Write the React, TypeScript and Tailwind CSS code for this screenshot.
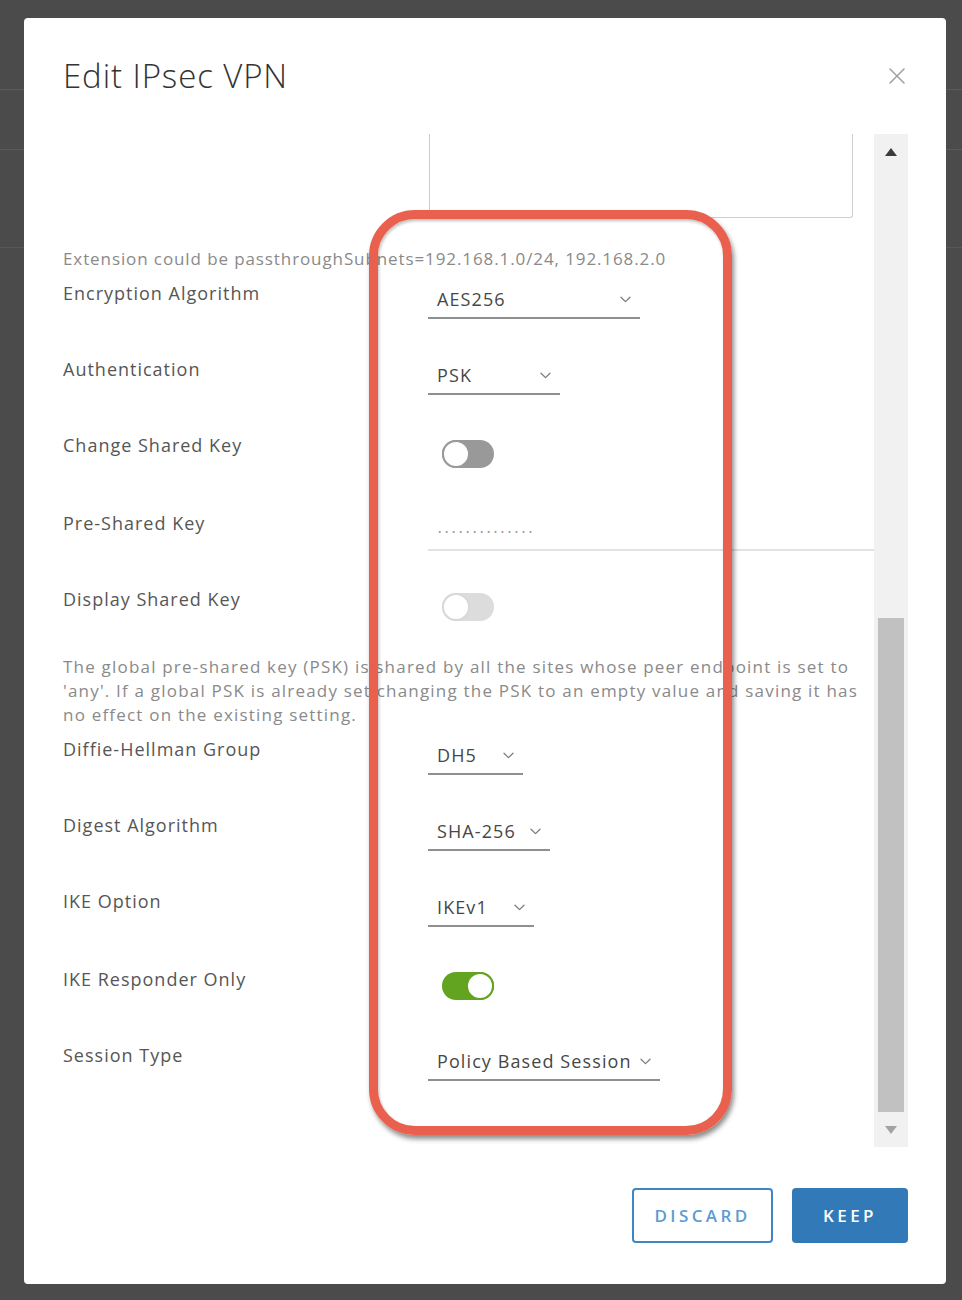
import React from 'react';

const Chevron = () => (
  <svg width="11" height="7" viewBox="0 0 11 7" fill="none" className="shrink-0">
    <path d="M1 1.2 L5.5 5.6 L10 1.2" stroke="#7d7d7d" strokeWidth="1.3" strokeLinecap="round" strokeLinejoin="round" />
  </svg>
);

const Select = ({ value, width }: { value: string; width: string }) => (
  <div className={`flex items-center justify-between ${width} pl-[9px] pr-[9px] pt-[6px] pb-[6px] border-b-2 border-[#8f8f8f]`}>
    <span className="leading-6 text-[18px] text-[#474747] tracking-[1.1px]">{value}</span>
    <Chevron />
  </div>
);

const Toggle = ({ state }: { state: 'off' | 'on' | 'disabled' }) => {
  const track =
    state === 'on' ? 'bg-[#62a420] justify-end' : state === 'off' ? 'bg-[#999999] justify-start' : 'bg-[#dcdcdc] justify-start';
  const knob =
    state === 'on' ? 'border-[#62a420]' : state === 'off' ? 'border-[#9a9a9a]' : 'border-[#d8d8d8]';
  return (
    <div className={`flex w-[52px] h-[28px] rounded-full ${track} ml-[14px]`}>
      <div className={`w-[28px] h-[28px] rounded-full bg-white border-2 ${knob}`} />
    </div>
  );
};

const Row = ({ label, height, children }: { label: string; height: string; children: React.ReactNode }) => (
  <div className={`flex ${height}`}>
    <div className="w-[365px] shrink-0 leading-6 text-[18px] text-[#565656] tracking-[1px]">{label}</div>
    <div className="flex-1 flex flex-col items-start">{children}</div>
  </div>
);

export default function App() {
  return (
    <div className="relative h-[1300px] w-full bg-[#4b4b4b] overflow-hidden" style={{ fontFamily: '"Open Sans", "Liberation Sans", sans-serif' }}>
      {/* page behind the overlay */}
      <div className="h-[90px] border-b border-[#5a5a5a]" />
      <div className="h-[60px] border-b border-[#5a5a5a]" />
      <div className="h-[98px] border-b border-[#575757]" />

      {/* modal */}
      <div className="absolute left-[24px] top-[18px] w-[922px] h-[1266px] bg-white rounded-[4px] flex flex-col">
        <div className="flex items-start justify-between pl-[39px] pr-[40px] pt-[36px] h-[116px]">
          <h1 className="text-[33px] font-light text-[#333] leading-[44px] tracking-[0.9px]">Edit IPsec VPN</h1>
          <svg width="18" height="18" viewBox="0 0 18 18" className="mt-[13px]">
            <path d="M2 2 L16 16 M16 2 L2 16" stroke="#a3a3a3" strokeWidth="1.6" strokeLinecap="round" />
          </svg>
        </div>

        <div className="flex h-[1013px] pl-[39px] pr-[38px]">
          <div className="flex-1 overflow-hidden">
            <div className="ml-[366px] w-[424px] h-[84px] border-l border-r border-b border-[#cfcfcf] rounded-br-[3px]" />
            <p className="mt-[29px] leading-6 text-[17px] text-[#8a8a8a] tracking-[0.9px] whitespace-nowrap">
              Extension could be passthroughSubnets=192.168.1.0/24, 192.168.2.0
            </p>
            <div className="mt-[10px]">
              <Row label="Encryption Algorithm" height="h-[76px]">
                <Select value="AES256" width="w-[212px]" />
              </Row>
              <Row label="Authentication" height="h-[76px]">
                <Select value="PSK" width="w-[132px]" />
              </Row>
              <Row label="Change Shared Key" height="h-[78px]">
                <div className="mt-[7px]">
                  <Toggle state="off" />
                </div>
              </Row>
              <Row label="Pre-Shared Key" height="h-[76px]">
                <div className="w-full pt-[9px] pb-[5px] pl-[10px] border-b-2 border-[#e2e2e2]">
                  <span className="block leading-6 text-[9px] text-[#9c9c9c] tracking-[3.6px]">••••••••••••••</span>
                </div>
              </Row>
              <Row label="Display Shared Key" height="h-[68px]">
                <div className="mt-[6px]">
                  <Toggle state="disabled" />
                </div>
              </Row>
            </div>
            <p className="leading-6 text-[17px] text-[#8a8a8a] tracking-[1.2px]">
              The global pre-shared key (PSK) is shared by all the sites whose peer endpoint is set to 'any'. If a global PSK is already set changing the PSK to an empty value and saving it has no effect on the existing setting.
            </p>
            <div className="mt-[10px]">
              <Row label="Diffie-Hellman Group" height="h-[76px]">
                <Select value="DH5" width="w-[95px]" />
              </Row>
              <Row label="Digest Algorithm" height="h-[76px]">
                <Select value="SHA-256" width="w-[122px]" />
              </Row>
              <Row label="IKE Option" height="h-[78px]">
                <Select value="IKEv1" width="w-[106px]" />
              </Row>
              <Row label="IKE Responder Only" height="h-[76px]">
                <div className="mt-[5px]">
                  <Toggle state="on" />
                </div>
              </Row>
              <Row label="Session Type" height="h-[76px]">
                <Select value="Policy Based Session" width="w-[232px]" />
              </Row>
            </div>
          </div>

          {/* scrollbar */}
          <div className="w-[34px] shrink-0 bg-[#f1f1f1] flex flex-col items-center">
            <div className="h-[36px] flex items-center justify-center">
              <svg width="12" height="8" viewBox="0 0 12 8"><path d="M6 0 L12 8 L0 8 Z" fill="#3c3c3c" /></svg>
            </div>
            <div className="h-[448px]" />
            <div className="w-[26px] h-[494px] bg-[#c1c1c1]" />
            <div className="flex-1 flex items-center justify-center">
              <svg width="12" height="8" viewBox="0 0 12 8"><path d="M0 0 L12 0 L6 8 Z" fill="#a3a3a3" /></svg>
            </div>
          </div>
        </div>

        <div className="flex justify-end gap-[19px] pr-[38px] pt-[41px]">
          <button className="w-[141px] h-[55px] rounded-[4px] border-2 border-[#3f86c6] text-[#5b9bd2] text-[17px] font-semibold tracking-[3.4px]">
            DISCARD
          </button>
          <button className="w-[116px] h-[55px] rounded-[4px] bg-[#3279b8] text-white text-[17px] font-semibold tracking-[3.4px]">
            KEEP
          </button>
        </div>
      </div>

      {/* annotation highlight */}
      <div className="absolute left-[369px] top-[210px] w-[363px] h-[925px] rounded-[46px] border-[9px] border-[#e9604e] shadow-[2px_4px_5px_rgba(0,0,0,0.45),inset_1px_2px_3px_rgba(0,0,0,0.25)]" />
    </div>
  );
}
